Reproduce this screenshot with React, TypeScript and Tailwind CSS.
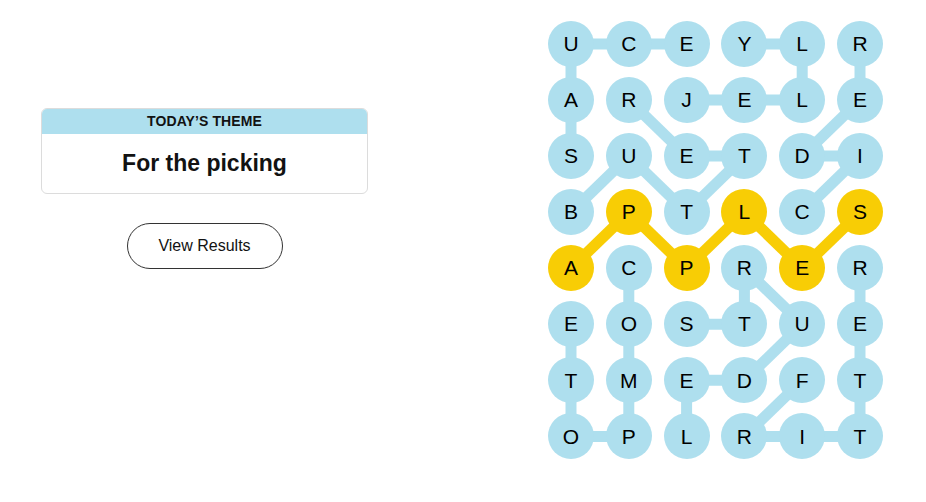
const BLUE = "#aedfee";
const YELLOW = "#f8cd05";

const letters = [
  "UCEYLR",
  "ARJELE",
  "SUETDI",
  "BPTLCS",
  "ACPRER",
  "EOSTUE",
  "TMEDFT",
  "OPLRIT",
];

// cells that belong to the found spangram-ish word (yellow)
const found = new Set(["4-0", "3-1", "4-2", "3-3", "4-4", "3-5"]);

// [r1, c1, r2, c2]
const blueLinks: number[][] = [
  [0, 0, 0, 1], [0, 1, 0, 2], [0, 3, 0, 4], [0, 4, 1, 4], [0, 5, 1, 5],
  [0, 0, 1, 0], [1, 0, 2, 0],
  [1, 1, 2, 2], [1, 2, 1, 3], [1, 3, 1, 4], [1, 5, 2, 4], [2, 4, 2, 5], [2, 5, 3, 4],
  [2, 2, 2, 3], [2, 3, 3, 2], [2, 1, 3, 0], [2, 1, 3, 2],
  [4, 1, 5, 1], [5, 1, 6, 1], [6, 1, 7, 1], [7, 1, 7, 0], [7, 0, 6, 0], [6, 0, 5, 0],
  [4, 3, 5, 3], [4, 3, 5, 4], [5, 2, 5, 3], [5, 4, 6, 3], [6, 2, 6, 3], [6, 2, 7, 2],
  [6, 4, 7, 3], [7, 3, 7, 4], [7, 4, 7, 5], [7, 5, 6, 5], [6, 5, 5, 5], [5, 5, 4, 5],
];

const yellowLinks: number[][] = [
  [4, 0, 3, 1], [3, 1, 4, 2], [4, 2, 3, 3], [3, 3, 4, 4], [4, 4, 3, 5],
];

const PITCH_X = 57.8;
const PITCH_Y = 56.06;
const SIZE = 46;

const cx = (c: number) => SIZE / 2 + c * PITCH_X;
const cy = (r: number) => SIZE / 2 + r * PITCH_Y;

function Board() {
  const w = SIZE + 5 * PITCH_X;
  const h = SIZE + 7 * PITCH_Y;
  return (
    <div className="relative">
      {/* connectors behind the letters */}
      <svg className="absolute left-0 top-0" width={w} height={h}>
        {blueLinks.map(([r1, c1, r2, c2], i) => (
          <line key={"b" + i} x1={cx(c1)} y1={cy(r1)} x2={cx(c2)} y2={cy(r2)} stroke={BLUE} strokeWidth={11} />
        ))}
        {yellowLinks.map(([r1, c1, r2, c2], i) => (
          <line key={"y" + i} x1={cx(c1)} y1={cy(r1)} x2={cx(c2)} y2={cy(r2)} stroke={YELLOW} strokeWidth={11} />
        ))}
      </svg>
      <div className="relative grid grid-cols-[repeat(6,46px)] gap-x-[11.8px] gap-y-[10.06px]">
        {letters.map((row, r) =>
          row.split("").map((ch, c) => (
            <div
              key={r + "-" + c}
              className={
                "w-[46px] h-[46px] rounded-full flex items-center justify-center text-[21px] text-black " +
                (found.has(r + "-" + c) ? "bg-[#f8cd05]" : "bg-[#aedfee]")
              }
            >
              {ch}
            </div>
          ))
        )}
      </div>
    </div>
  );
}

export default function App() {
  return (
    <div className="w-[926px] h-[502px] bg-white flex font-['Liberation_Sans',Arial,sans-serif] text-[#121212]">
      {/* Left - theme card & results */}
      <div className="pl-[41px] pt-[108px] flex flex-col items-center w-[368px]">
        <div className="w-[327px] rounded-[6px] border border-[#dcdcdc] overflow-hidden">
          <div className="h-[25px] bg-[#aedfee] flex items-center justify-center text-[14px] font-semibold uppercase tracking-[0.1px]">
            Today’s Theme
          </div>
          <div className="h-[59px] flex items-center justify-center text-[23px] font-bold">
            For the picking
          </div>
        </div>
        <button className="mt-[29px] w-[156px] h-[46px] rounded-full border border-[#333] text-[16px] bg-white">
          View Results
        </button>
      </div>

      {/* Right - board */}
      <div className="ml-[180px] pt-[21px]">
        <Board />
      </div>
    </div>
  );
}
